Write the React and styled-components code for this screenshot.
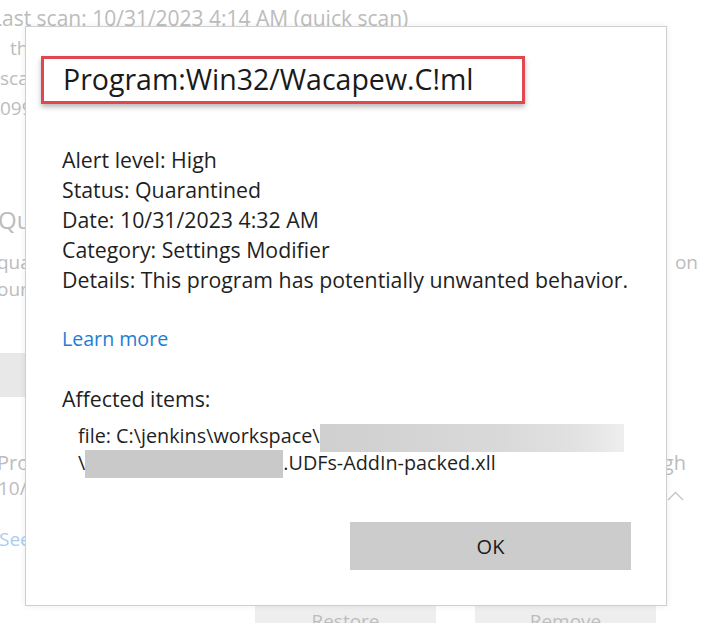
import React from "react";
import styled, { createGlobalStyle } from "styled-components";

const GlobalStyle = createGlobalStyle`
  html, body {
    margin: 0;
    padding: 0;
    background: #ffffff;
  }
  body {
    font-family: "Open Sans", "Noto Sans", sans-serif;
    overflow: hidden;
  }
`;

// faded window behind the dialog
const Page = styled.div`
  position: relative;
  width: 720px;
  height: 623px;
  overflow: hidden;
  color: #b9b9b9;
  font-size: 17px;
`;

const BgLine = styled.div`
  height: ${(p) => p.h || 30}px;
  line-height: ${(p) => p.h || 30}px;
  margin-top: ${(p) => p.mt || 0}px;
  padding-left: ${(p) => p.indent || 0}px;
  padding-right: ${(p) => p.pr || 34}px;
  font-size: ${(p) => p.size || 19}px;
  color: ${(p) => p.color || "#bcbcbc"};
  white-space: nowrap;
  display: flex;
  justify-content: space-between;
  align-items: center;
`;

const Chevron = styled.svg`
  width: 17px;
  height: 10px;
  margin-top: 14px;
`;

const BgBlock = styled.div`
  width: 170px;
  height: 44px;
  margin-top: ${(p) => p.mt || 0}px;
  margin-left: -145px;
  background: #e8e8e8;
`;

const BgButtons = styled.div`
  display: flex;
  gap: 39px;
  margin-top: ${(p) => p.mt || 0}px;
  padding-left: 255px;
`;

const BgButton = styled.div`
  width: 181px;
  height: 40px;
  background: #eeeeee;
  color: #bdbdbd;
  font-size: 19px;
  text-align: center;
  padding-top: 14px;
  box-sizing: border-box;
`;

const Dialog = styled.div`
  position: absolute;
  left: 25px;
  top: 26px;
  width: 642px;
  height: 580px;
  box-sizing: border-box;
  background: #ffffff;
  border: 1px solid #cfcfcf;
  box-shadow: 0 0 6px rgba(0, 0, 0, 0.08);
  padding: 29px 35px 0 15px;
  display: flex;
  flex-direction: column;
  color: #1f1f1f;
`;

const TitleBox = styled.div`
  width: 484px;
  height: 48px;
  box-sizing: border-box;
  border: 3px solid #e0474f;
  box-shadow: 0 3px 5px rgba(0, 0, 0, 0.28);
  padding-left: 19px;
  font-size: 28.5px;
  line-height: 40px;
  color: #1a1a1a;
  white-space: nowrap;
`;

const Body = styled.div`
  padding-left: 21px;
  display: flex;
  flex-direction: column;
`;

const Lines = styled.div`
  margin-top: ${(p) => p.mt || 0}px;
  font-size: 21.3px;
  line-height: 30px;
  white-space: nowrap;
`;

const Link = styled.div`
  margin-top: 29px;
  font-size: 19.6px;
  line-height: 30px;
  color: #1d7ed3;
`;

const Files = styled.div`
  margin-top: 9px;
  padding-left: 16px;
  font-size: 19.8px;
  line-height: 26px;
  white-space: nowrap;
`;

const Redacted = styled.span`
  display: inline-block;
  vertical-align: middle;
  width: ${(p) => p.w}px;
  height: 28px;
  margin: -2px 0;
  background: ${(p) =>
    p.fade
      ? "linear-gradient(90deg, #cfcfcf 0%, #d9d9d9 60%, #e2e2e2 85%, #eeeeee 100%)"
      : "#c9c9c9"};
`;

const Footer = styled.div`
  display: flex;
  justify-content: flex-end;
  margin-top: 46px;
`;

const OkButton = styled.button`
  width: 281px;
  height: 48px;
  border: none;
  background: #cccccc;
  font-family: "Open Sans", "Noto Sans", sans-serif;
  font-size: 20px;
  color: #1a1a1a;
`;

export default function App() {
  return (
    <>
      <GlobalStyle />
      <Page>
        <BgLine mt={3} size={21} style={{ marginLeft: -9 }}>
          <span>Last scan: 10/31/2023 4:14 AM (quick scan)</span>
        </BgLine>
        <BgLine indent={10}>
          <span>this device</span>
        </BgLine>
        <BgLine>
          <span>scanned.</span>
        </BgLine>
        <BgLine>
          <span>099 files scanned.</span>
        </BgLine>
        <BgLine mt={80} size={24} h={34} style={{ marginLeft: -2 }}>
          <span>Quarantined threats</span>
        </BgLine>
        <BgLine mt={12} h={27} pr={22} style={{ marginLeft: -3 }}>
          <span>quarantined threats are isolated</span>
          <span>on</span>
        </BgLine>
        <BgLine h={27} style={{ marginLeft: -3 }}>
          <span>ourselves.</span>
        </BgLine>
        <BgBlock mt={50} />
        <BgLine mt={52} size={20} h={27} pr={34} style={{ marginLeft: -3 }}>
          <span>Program:Win32/Wacapew.C!ml</span>
          <span>High</span>
        </BgLine>
        <BgLine h={25} pr={36} style={{ marginLeft: -2 }}>
          <span>10/31/2023</span>
          <Chevron viewBox="0 0 17 10">
            <path d="M1 9 L8.5 1.5 L16 9" fill="none" stroke="#c4c4c4" strokeWidth="1.3" />
          </Chevron>
        </BgLine>
        <BgLine mt={25} h={27} color="#a9cdef" style={{ marginLeft: -1 }}>
          <span>See details</span>
        </BgLine>
        <BgButtons mt={41}>
          <BgButton>Restore</BgButton>
          <BgButton>Remove</BgButton>
        </BgButtons>

        <Dialog>
          <TitleBox>Program:Win32/Wacapew.C!ml</TitleBox>
          <Body>
            <Lines mt={41}>
              <div>Alert level: High</div>
              <div>Status: Quarantined</div>
              <div>Date: 10/31/2023 4:32 AM</div>
              <div>Category: Settings Modifier</div>
              <div>Details: This program has potentially unwanted behavior.</div>
            </Lines>
            <Link>Learn more</Link>
            <Lines mt={30}>
              <div>Affected items:</div>
            </Lines>
            <Files>
              <div>
                file: C:\jenkins\workspace\<Redacted w={304} fade />
              </div>
              <div>
                \<Redacted w={198} />.UDFs-AddIn-packed.xll
              </div>
            </Files>
          </Body>
          <Footer>
            <OkButton>OK</OkButton>
          </Footer>
        </Dialog>
      </Page>
    </>
  );
}
